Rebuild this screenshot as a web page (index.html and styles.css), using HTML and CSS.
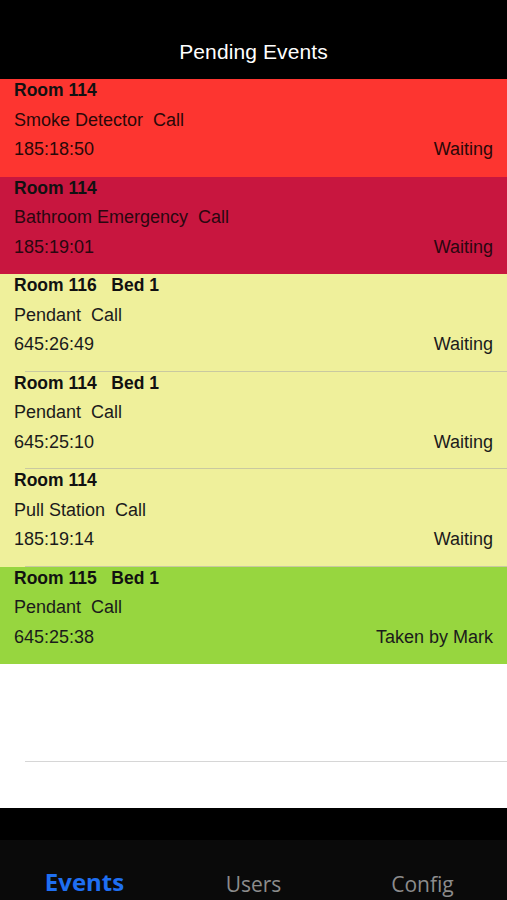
FILE: index.html
```html
<!DOCTYPE html>
<html>
<head>
<title>Pending Events</title>
<meta charset="utf-8">
<link rel="stylesheet" href="styles.css">
</head>
<body>

<div class="app">
    <div class="top">Pending Events</div>

    <ul class="events">
        <li class="ev red">
            <b>Room 114</b>
            <p>Smoke Detector&nbsp; Call</p>
            <p class="last"><span>185:18:50</span><span>Waiting</span></p>
        </li>
        <li class="ev crimson">
            <b>Room 114</b>
            <p>Bathroom Emergency&nbsp; Call</p>
            <p class="last"><span>185:19:01</span><span>Waiting</span></p>
        </li>
        <li class="ev yellow">
            <b>Room 116 &nbsp; Bed 1</b>
            <p>Pendant&nbsp; Call</p>
            <p class="last"><span>645:26:49</span><span>Waiting</span></p>
        </li>
        <li class="ev yellow">
            <b>Room 114 &nbsp; Bed 1</b>
            <p>Pendant&nbsp; Call</p>
            <p class="last"><span>645:25:10</span><span>Waiting</span></p>
        </li>
        <li class="ev yellow">
            <b>Room 114</b>
            <p>Pull Station&nbsp; Call</p>
            <p class="last"><span>185:19:14</span><span>Waiting</span></p>
        </li>
        <li class="ev green">
            <b>Room 115 &nbsp; Bed 1</b>
            <p>Pendant&nbsp; Call</p>
            <p class="last"><span>645:25:38</span><span>Taken by Mark</span></p>
        </li>
        <li class="ev empty"></li>
    </ul>

    <div class="spacer"></div>

    <div class="tabs">
        <div class="tab on">Events</div>
        <div class="tab">Users</div>
        <div class="tab">Config</div>
    </div>
</div>

</body>
</html>
```

FILE: styles.css
```css
*{margin:0;padding:0;box-sizing:border-box;}
body{background:#fff;font-family:"Liberation Sans",Arial,sans-serif;}
ul,li{list-style:none;}
.app{width:507px;height:900px;display:flex;flex-direction:column;}
.top{height:79px;background:#000;color:#fff;font-size:21px;font-weight:500;text-align:center;padding-top:40px;line-height:24px;letter-spacing:0.1px;}
.events{display:flex;flex-direction:column;}
.ev{height:97.5px;padding:0 14px 0 14px;display:flex;flex-direction:column;gap:7.5px;font-size:18px;line-height:22px;color:#1b1b1b;
    background-image:linear-gradient(#c9c9a0,#c9c9a0);background-size:calc(100% - 25px) 1px;background-position:right bottom;background-repeat:no-repeat;}
.ev b{font-weight:bold;color:#111;font-size:17.5px;}
.ev .last{display:flex;justify-content:space-between;}
.red{background-color:#fd3530;color:#2a0808;background-image:none;}
.crimson{background-color:#c8163f;color:#2a0710;background-image:none;}
.yellow{background-color:#eff09b;}
.green{background-color:#97d63f;background-image:none;}
.empty{background-color:#fff;background-image:linear-gradient(#d6d6d6,#d6d6d6);}
.spacer{height:46px;background:#fff;}
.tabs{flex:1;background:#0a0a0a;border-top:32px solid #000;display:flex;align-items:flex-end;padding-bottom:2px;}
.tab{flex:1;text-align:center;font-family:"Open Sans",sans-serif;font-size:21px;color:#8c8c8c;line-height:28px;}
.tab.on{color:#1f6ff2;font-weight:bold;font-size:24px;padding-bottom:2px;}
```
